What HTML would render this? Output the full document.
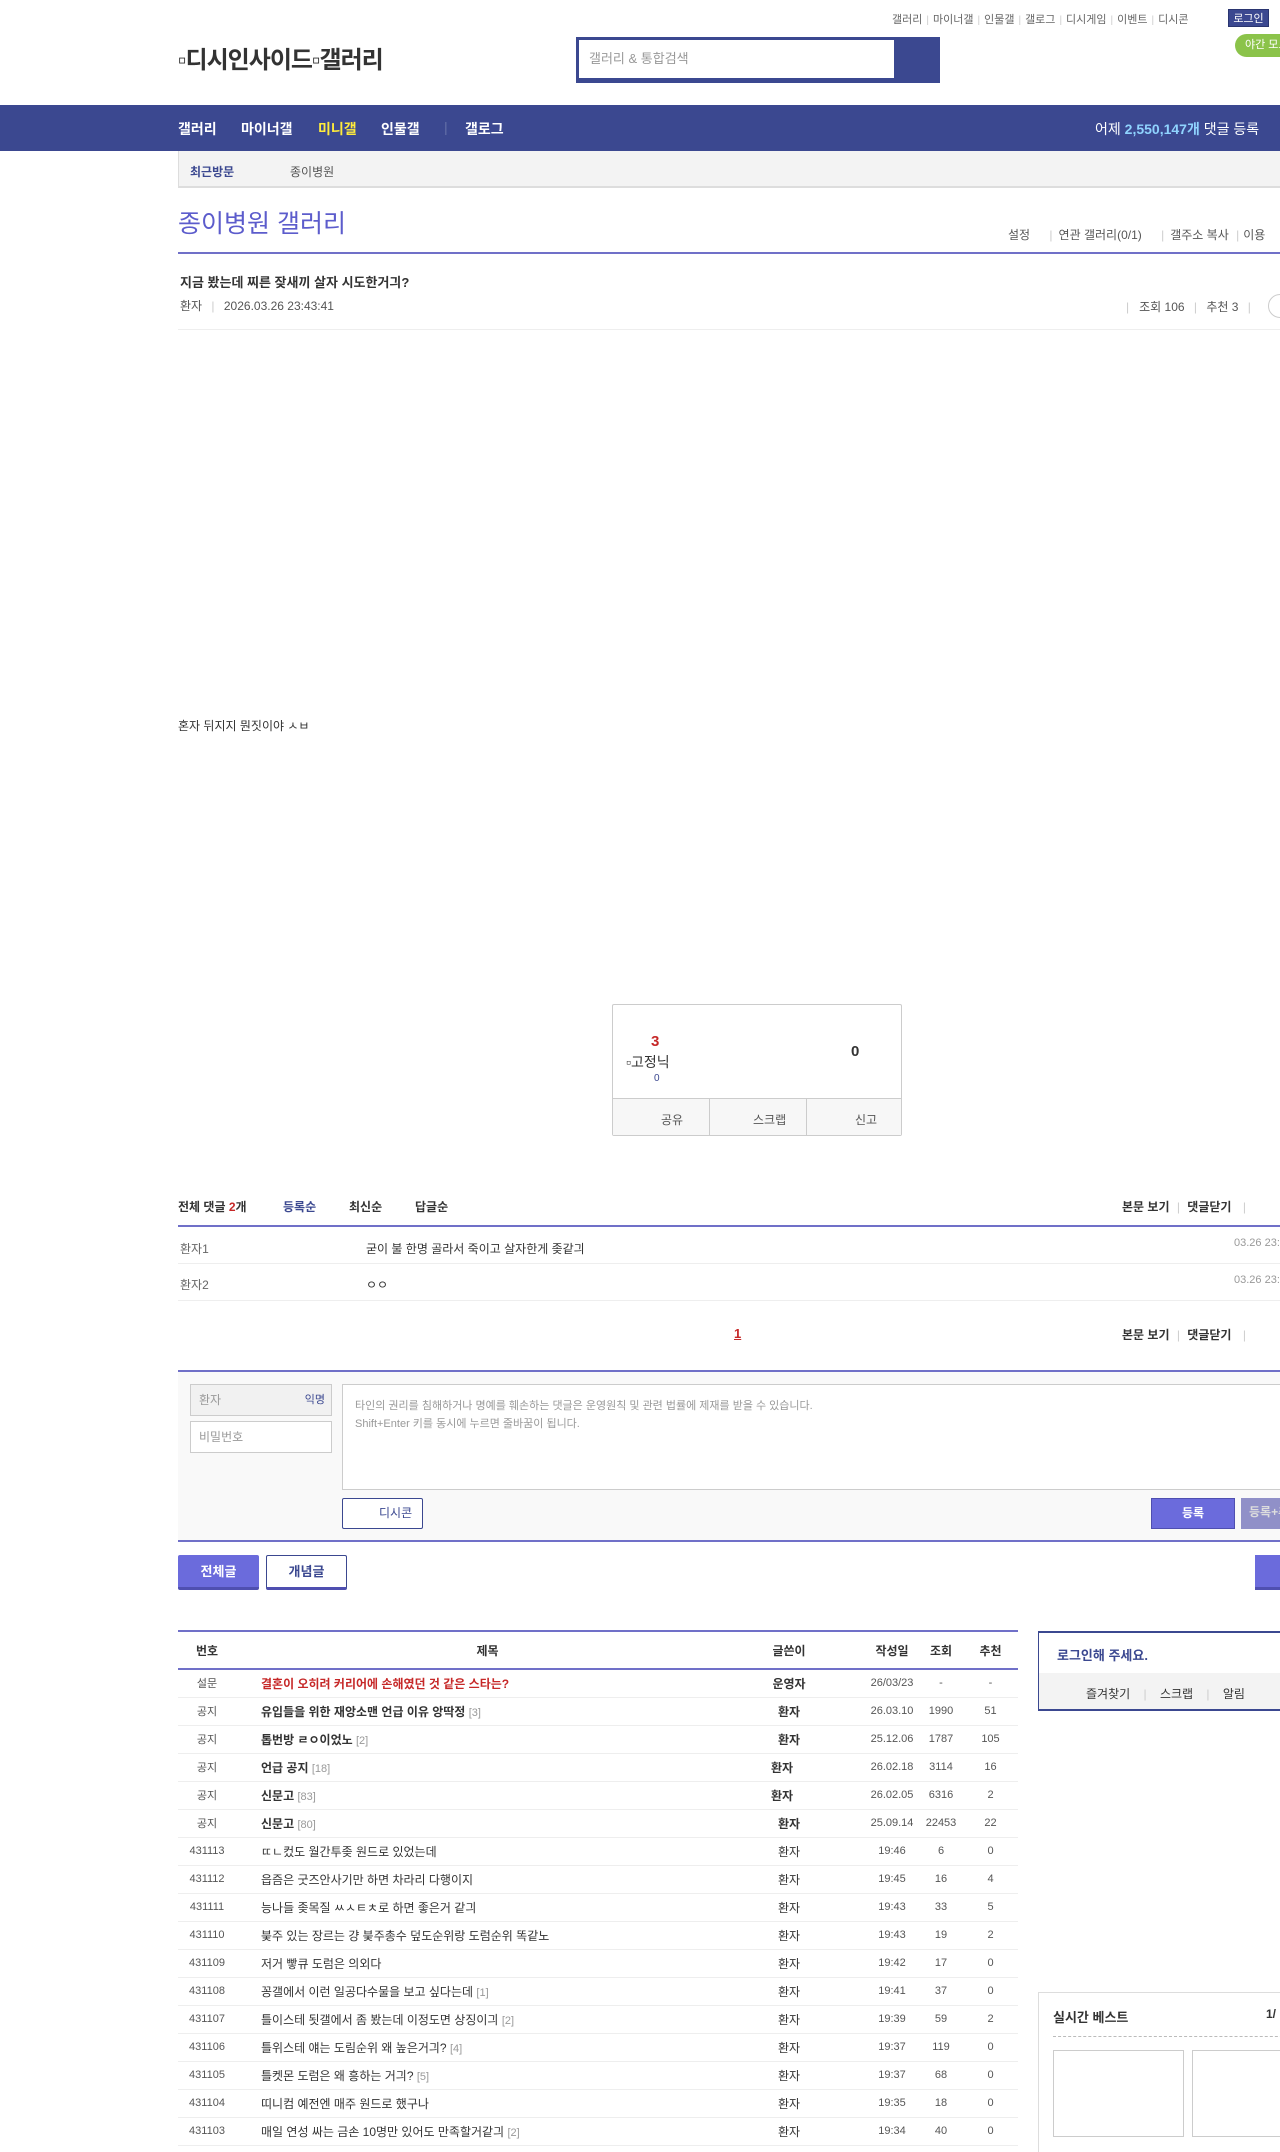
<!DOCTYPE html>
<html><head><meta charset="utf-8">
<style>
*{margin:0;padding:0;box-sizing:border-box}
body{width:1280px;height:2148px;overflow:hidden;position:relative;background:#fff;font-family:"Liberation Sans","Noto Sans CJK KR",sans-serif;color:#333;font-size:12px}
.a{position:absolute;white-space:nowrap}
.top a{color:#666;font-size:11px;text-decoration:none}
.top .s{color:#ccc;margin:0 4px;font-size:10px}
.nav{left:0;top:105px;width:1280px;height:46px;background:#3b4890}
.nav span{position:absolute;top:14px;color:#fff;font-weight:bold;font-size:14px}
table{border-collapse:collapse;table-layout:fixed}
.lt{position:absolute;left:178px;top:1630px;width:840px;border-top:2px solid #7070c8}
.lt td,.lt th{height:28px;border-bottom:1px solid #eee;font-size:12px;text-align:center;font-weight:normal;white-space:nowrap}
.lt th{height:38px;border-bottom:2px solid #7070c8;font-weight:bold;font-size:12px}
.lt td.t{text-align:left;padding-left:25px;color:#333}
.lt td.n{font-size:11px;color:#555}
.lt td.d,.lt th.d{padding-left:26px}
.lt .c{color:#999;font-size:11px;font-weight:normal}
.lt td.b,.b{font-weight:bold}
</style></head><body>
<div class="a top" style="left:892px;top:11px"><a>갤러리</a><span class="s">|</span><a>마이너갤</a><span class="s">|</span><a>인물갤</a><span class="s">|</span><a>갤로그</a><span class="s">|</span><a>디시게임</a><span class="s">|</span><a>이벤트</a><span class="s">|</span><a>디시콘</a></div>
<div class="a" style="left:1228px;top:9px;width:41px;height:18px;background:#3b4890;color:#fff;font-size:11px;text-align:center;line-height:18px;border:1px solid #2a3570">로그인</div>
<div class="a" style="left:1235px;top:34px;width:60px;height:23px;background:#8bc34a;color:#fff;border-radius:12px;font-size:11px;line-height:23px;padding-left:10px">야간 모드</div>
<div class="a" style="left:178px;top:40px;font-size:24px;font-weight:bold;color:#333;letter-spacing:-1px">▫디시인사이드▫갤러리</div>
<div class="a" style="left:576px;top:37px;width:364px;height:46px;background:#3b4890"></div>
<div class="a" style="left:579px;top:40px;width:315px;height:38px;background:#fff;color:#999;font-size:13px;line-height:38px;padding-left:10px">갤러리 &amp; 통합검색</div>
<div class="a nav"><span style="left:178px">갤러리</span><span style="left:241px">마이너갤</span><span style="left:318px;color:#ffeb3b">미니갤</span><span style="left:381px">인물갤</span><span style="left:444px;color:#6570a8;font-weight:normal">|</span><span style="left:465px">갤로그</span><span style="left:1095px;font-weight:normal">어제 <b style="color:#8fd3fe">2,550,147개</b> 댓글 등록</span></div>
<div class="a" style="left:178px;top:151px;width:1110px;height:37px;background:#f3f3f3;border-left:1px solid #ddd;border-bottom:2px solid #ddd"></div>
<div class="a" style="left:190px;top:163px;font-size:12px;color:#3b4890;font-weight:bold">최근방문</div>
<div class="a" style="left:290px;top:163px;font-size:12px;color:#555">종이병원</div>
<div class="a" style="left:178px;top:204px;font-size:25px;color:#5c5ccc">종이병원 갤러리</div>
<div class="a" style="left:1008px;top:226px;font-size:12px;color:#555">설정 <span style="color:#ccc;margin:0 6px 0 16px">|</span>연관 갤러리(0/1) <span style="color:#ccc;margin:0 6px 0 16px">|</span>갤주소 복사 <span style="color:#ccc;margin:0 4px">|</span>이용</div>
<div class="a" style="left:178px;top:252px;width:1110px;height:2px;background:#7070c8"></div>
<div class="a" style="left:180px;top:272px;font-size:13px;font-weight:bold;color:#333">지금 봤는데 찌른 잦새끼 살자 시도한거긔?</div>
<div class="a" style="left:180px;top:297px;font-size:12px;color:#555">환자 <span style="color:#ccc;margin:0 6px">|</span> 2026.03.26 23:43:41</div>
<div class="a" style="left:1126px;top:298px;font-size:12px;color:#555"><span style="color:#ccc">|</span>&nbsp;&nbsp; 조회 106 <span style="color:#ccc;margin:0 6px">|</span> 추천 3 <span style="color:#ccc;margin:0 6px">|</span></div>
<div class="a" style="left:1268px;top:294px;width:24px;height:24px;border:1px solid #ccc;border-radius:12px"></div>
<div class="a" style="left:178px;top:329px;width:1110px;height:1px;background:#eee"></div>
<div class="a" style="left:178px;top:717px;font-size:12px;color:#333">혼자 뒤지지 뭔짓이야 ㅅㅂ</div>

<div class="a" style="left:612px;top:1004px;width:290px;height:132px;border:1px solid #ccc;border-radius:2px"></div>
<div class="a" style="left:651px;top:1033px;font-size:15px;font-weight:bold;color:#c62828">3</div>
<div class="a" style="left:626px;top:1052px;font-size:14px;color:#333">▫고정닉</div>
<div class="a" style="left:654px;top:1073px;font-size:10px;color:#3b4890">0</div>
<div class="a" style="left:851px;top:1043px;font-size:15px;font-weight:bold;color:#333">0</div>
<div class="a" style="left:613px;top:1098px;width:288px;height:37px;background:#f7f7f7;border-top:1px solid #ccc"></div>
<div class="a" style="left:709px;top:1098px;width:1px;height:37px;background:#ccc"></div>
<div class="a" style="left:806px;top:1098px;width:1px;height:37px;background:#ccc"></div>
<div class="a" style="left:661px;top:1111px;font-size:12px;color:#555">공유</div>
<div class="a" style="left:753px;top:1111px;font-size:12px;color:#555">스크랩</div>
<div class="a" style="left:855px;top:1111px;font-size:12px;color:#555">신고</div>

<div class="a" style="left:178px;top:1198px;font-size:12px;font-weight:bold;color:#333">전체 댓글 <span style="color:#c62828">2</span>개</div>
<div class="a" style="left:283px;top:1198px;font-size:12px;font-weight:bold;color:#3b4890">등록순</div>
<div class="a" style="left:349px;top:1198px;font-size:12px;font-weight:bold">최신순</div>
<div class="a" style="left:415px;top:1198px;font-size:12px;font-weight:bold">답글순</div>
<div class="a" style="left:1122px;top:1198px;font-size:12px;font-weight:bold">본문 보기 <span style="color:#ccc;font-weight:normal;margin:0 4px">|</span> 댓글닫기 <span style="color:#ccc;font-weight:normal;margin-left:8px">|</span></div>
<div class="a" style="left:178px;top:1225px;width:1110px;height:2px;background:#7070c8"></div>
<div class="a" style="left:180px;top:1240px;font-size:12px;color:#666">환자1</div>
<div class="a" style="left:366px;top:1240px;font-size:12px;color:#333">굳이 불 한명 골라서 죽이고 살자한게 좆같긔</div>
<div class="a" style="left:1234px;top:1237px;font-size:11px;color:#999">03.26 23:45</div>
<div class="a" style="left:178px;top:1263px;width:1110px;height:1px;background:#eee"></div>
<div class="a" style="left:180px;top:1276px;font-size:12px;color:#666">환자2</div>
<div class="a" style="left:366px;top:1276px;font-size:12px;color:#333">ㅇㅇ</div>
<div class="a" style="left:1234px;top:1274px;font-size:11px;color:#999">03.26 23:46</div>
<div class="a" style="left:178px;top:1300px;width:1110px;height:1px;background:#eee"></div>
<div class="a" style="left:734px;top:1326px;font-size:13px;font-weight:bold;color:#c62828;text-decoration:underline">1</div>
<div class="a" style="left:1122px;top:1326px;font-size:12px;font-weight:bold">본문 보기 <span style="color:#ccc;font-weight:normal;margin:0 4px">|</span> 댓글닫기 <span style="color:#ccc;font-weight:normal;margin-left:8px">|</span></div>

<div class="a" style="left:178px;top:1370px;width:1110px;height:172px;background:#f9f9f9;border-top:2px solid #7070c8;border-bottom:2px solid #7070c8"></div>
<div class="a" style="left:190px;top:1384px;width:142px;height:32px;background:#f1f1f1;border:1px solid #ccc;font-size:12px;color:#999;line-height:30px;padding-left:8px">환자<span style="position:absolute;right:6px;color:#3b4890;font-size:11px">익명</span></div>
<div class="a" style="left:190px;top:1421px;width:142px;height:32px;background:#fff;border:1px solid #ccc;font-size:12px;color:#999;line-height:30px;padding-left:8px">비밀번호</div>
<div class="a" style="left:342px;top:1384px;width:960px;height:106px;background:#fff;border:1px solid #ccc;font-size:11px;color:#999;padding:12px 12px;line-height:18px">타인의 권리를 침해하거나 명예를 훼손하는 댓글은 운영원칙 및 관련 법률에 제재를 받을 수 있습니다.<br>Shift+Enter 키를 동시에 누르면 줄바꿈이 됩니다.</div>
<div class="a" style="left:342px;top:1498px;width:81px;height:31px;background:#fff;border:1px solid #3b4890;border-radius:2px;font-size:12px;color:#3b4890;line-height:29px;padding-left:36px">디시콘</div>
<div class="a" style="left:1151px;top:1498px;width:84px;height:31px;background:#6b6bdc;border:1px solid #4f4fb0;color:#fff;font-size:12px;font-weight:bold;text-align:center;line-height:29px">등록</div>
<div class="a" style="left:1241px;top:1498px;width:84px;height:31px;background:#9090c8;color:#ddd;font-size:12px;font-weight:bold;line-height:29px;padding-left:8px">등록+추천</div>

<div class="a" style="left:178px;top:1555px;width:81px;height:35px;background:#6b6bdc;border-bottom:3px solid #4f4fb0;color:#fff;font-size:13px;font-weight:bold;text-align:center;line-height:33px;border-radius:2px">전체글</div>
<div class="a" style="left:266px;top:1555px;width:81px;height:35px;background:#fff;border:1px solid #3b4890;border-bottom:3px solid #4f4fb0;color:#3b4890;font-size:13px;font-weight:bold;text-align:center;line-height:31px;border-radius:2px">개념글</div>
<div class="a" style="left:1255px;top:1555px;width:40px;height:35px;background:#6b6bdc;border-bottom:3px solid #4f4fb0"></div>

<table class="lt">
<colgroup><col style="width:58px"><col style="width:503px"><col style="width:100px"><col style="width:80px"><col style="width:44px"><col style="width:55px"></colgroup>
<tr><th>번호</th><th>제목</th><th>글쓴이</th><th class="d">작성일</th><th>조회</th><th>추천</th></tr>
<tr><td class="n">설문</td><td class="t b" style="color:#c62828">결혼이 오히려 커리어에 손해였던 것 같은 스타는?</td><td class="b">운영자</td><td class="n d">26/03/23</td><td class="n">-</td><td class="n">-</td></tr>
<tr><td class="n">공지</td><td class="t b">유입들을 위한 재앙소맨 언급 이유 앙딱정 <span class="c">[3]</span></td><td class="b">환자</td><td class="n d">26.03.10</td><td class="n">1990</td><td class="n">51</td></tr>
<tr><td class="n">공지</td><td class="t b">톱번방 ㄹㅇ이었노 <span class="c">[2]</span></td><td class="b">환자</td><td class="n d">25.12.06</td><td class="n">1787</td><td class="n">105</td></tr>
<tr><td class="n">공지</td><td class="t b">언급 공지 <span class="c">[18]</span></td><td class="b" style="padding-right:14px">환자</td><td class="n d">26.02.18</td><td class="n">3114</td><td class="n">16</td></tr>
<tr><td class="n">공지</td><td class="t b">신문고 <span class="c">[83]</span></td><td class="b" style="padding-right:14px">환자</td><td class="n d">26.02.05</td><td class="n">6316</td><td class="n">2</td></tr>
<tr><td class="n">공지</td><td class="t b">신문고 <span class="c">[80]</span></td><td class="b">환자</td><td class="n d">25.09.14</td><td class="n">22453</td><td class="n">22</td></tr>
<tr><td class="n">431113</td><td class="t">ㄸㄴ컸도 월간투좆 원드로 있었는데</td><td>환자</td><td class="n d">19:46</td><td class="n">6</td><td class="n">0</td></tr>
<tr><td class="n">431112</td><td class="t">읍즘은 굿즈안사기만 하면 차라리 다행이지</td><td>환자</td><td class="n d">19:45</td><td class="n">16</td><td class="n">4</td></tr>
<tr><td class="n">431111</td><td class="t">능나들 좆목질 ㅆㅅㅌㅊ로 하면 좋은거 같긔</td><td>환자</td><td class="n d">19:43</td><td class="n">33</td><td class="n">5</td></tr>
<tr><td class="n">431110</td><td class="t">붖주 있는 장르는 걍 붖주총수 덮도순위랑 도럼순위 똑같노</td><td>환자</td><td class="n d">19:43</td><td class="n">19</td><td class="n">2</td></tr>
<tr><td class="n">431109</td><td class="t">저거 빻큐 도럼은 의외다</td><td>환자</td><td class="n d">19:42</td><td class="n">17</td><td class="n">0</td></tr>
<tr><td class="n">431108</td><td class="t">꽁갤에서 이런 일공다수물을 보고 싶다는데 <span class="c">[1]</span></td><td>환자</td><td class="n d">19:41</td><td class="n">37</td><td class="n">0</td></tr>
<tr><td class="n">431107</td><td class="t">틀이스테 됫갤에서 좀 봤는데 이정도면 상징이긔 <span class="c">[2]</span></td><td>환자</td><td class="n d">19:39</td><td class="n">59</td><td class="n">2</td></tr>
<tr><td class="n">431106</td><td class="t">틀위스테 얘는 도림순위 왜 높은거긔? <span class="c">[4]</span></td><td>환자</td><td class="n d">19:37</td><td class="n">119</td><td class="n">0</td></tr>
<tr><td class="n">431105</td><td class="t">틀켓몬 도럼은 왜 흥하는 거긔? <span class="c">[5]</span></td><td>환자</td><td class="n d">19:37</td><td class="n">68</td><td class="n">0</td></tr>
<tr><td class="n">431104</td><td class="t">띠니컴 예전엔 매주 원드로 했구나</td><td>환자</td><td class="n d">19:35</td><td class="n">18</td><td class="n">0</td></tr>
<tr><td class="n">431103</td><td class="t">매일 연성 싸는 금손 10명만 있어도 만족할거같긔 <span class="c">[2]</span></td><td>환자</td><td class="n d">19:34</td><td class="n">40</td><td class="n">0</td></tr>
</table>

<div class="a" style="left:1038px;top:1631px;width:260px;height:80px;border:1px solid #3b4890;border-top-width:2px;border-bottom-width:2px"></div>
<div class="a" style="left:1057px;top:1645px;font-size:13px;font-weight:bold;color:#3b4890">로그인해 주세요.</div>
<div class="a" style="left:1039px;top:1673px;width:250px;height:36px;background:#f3f3f3"></div>
<div class="a" style="left:1086px;top:1685px;font-size:12px;color:#333">즐겨찾기 <span style="color:#ccc;margin:0 10px">|</span> 스크랩 <span style="color:#ccc;margin:0 10px">|</span> 알림</div>

<div class="a" style="left:1038px;top:1992px;width:260px;height:160px;border:1px solid #ddd;border-bottom:none"></div>
<div class="a" style="left:1053px;top:2007px;font-size:13px;font-weight:bold;color:#333">실시간 베스트</div>
<div class="a" style="left:1266px;top:2007px;font-size:12px;font-weight:bold;color:#333">1/</div>
<div class="a" style="left:1053px;top:2036px;width:240px;border-top:1px dashed #bbb"></div>
<div class="a" style="left:1053px;top:2050px;width:131px;height:87px;border:1px solid #ccc"></div>
<div class="a" style="left:1192px;top:2050px;width:131px;height:87px;border:1px solid #ccc"></div>
</body></html>
